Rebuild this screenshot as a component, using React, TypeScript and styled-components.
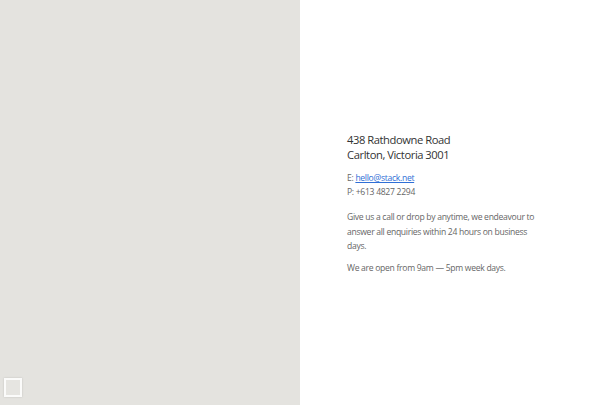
import React from "react";
import styled, { createGlobalStyle } from "styled-components";

const Global = createGlobalStyle`
  html, body { margin: 0; padding: 0; }
  body { font-family: "Open Sans", "Liberation Sans", sans-serif; }
`;

const Page = styled.div`
  display: grid;
  grid-template-columns: 300px 1fr;
  width: 600px;
  height: 405px;
  overflow: hidden;
`;

const MapPanel = styled.div`
  background: #e4e3df;
  display: flex;
  align-items: flex-end;
  padding: 0 0 8px 4px;
`;

const MapControl = styled.div`
  width: 14px;
  height: 15px;
  border: 2px solid #fbfbfa;
  box-shadow: 0 0 2px rgba(0, 0, 0, 0.15);
  background: #e6e5e1;
`;

const Info = styled.div`
  padding: 132px 40px 0 47px;
`;

const Address = styled.h3`
  margin: 0 0 8.5px;
  font-size: 11.2px;
  font-weight: 400;
  line-height: 15px;
  letter-spacing: -0.4px;
  word-spacing: -0.3px;
  color: #333;
`;

const Text = styled.p<{ $gap?: number }>`
  margin: 0 0 ${(p) => p.$gap ?? 7}px;
  font-size: 8.6px;
  line-height: 14.5px;
  letter-spacing: -0.3px;
  color: #666;
  max-width: 200px;
`;

const Link = styled.a`
  color: #2f6fd6;
  text-decoration: underline;
`;

export default function App() {
  return (
    <>
      <Global />
      <Page>
        <MapPanel>
          <MapControl />
        </MapPanel>
        <Info>
          <Address>
            438 Rathdowne Road
            <br />
            Carlton, Victoria 3001
          </Address>
          <Text $gap={10.5}>
            E: <Link href="#">hello@stack.net</Link>
            <br />
            P: +613 4827 2294
          </Text>
          <Text>
            Give us a call or drop by anytime, we endeavour to answer all enquiries within 24 hours on business days.
          </Text>
          <Text>We are open from 9am — 5pm week days.</Text>
        </Info>
      </Page>
    </>
  );
}
